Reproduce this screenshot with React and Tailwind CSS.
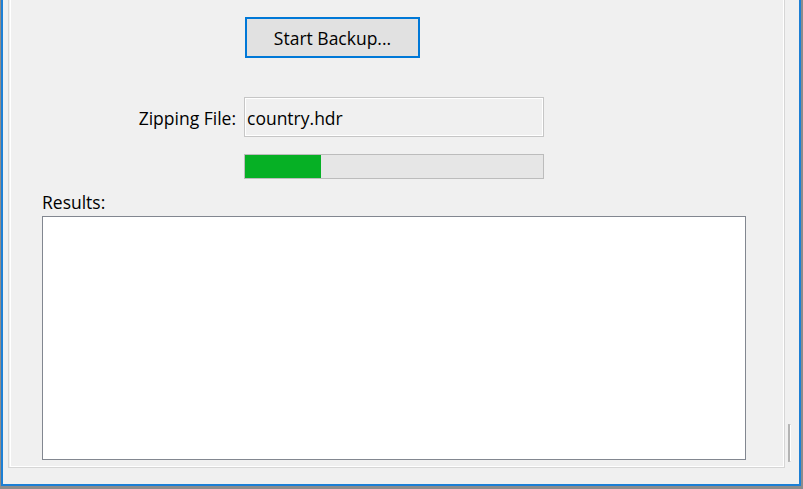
import React from "react";

const font = { fontFamily: '"Open Sans", "Noto Sans", sans-serif' };

export default function App() {
  const progress = 76;

  return (
    <div
      className="w-[803px] h-[489px] bg-[#8c8c8c] pl-[1px] pr-[2px] pb-[3px] overflow-hidden text-[#000000]"
      style={font}
    >
      <div className="h-full border-l-2 border-r-2 border-b-2 border-[#1c7fd5] bg-[#f0f0f0] flex">
        {/* tab page */}
        <div className="ml-[5px] mb-[16px] w-[777px] border-l border-r border-b border-[#d6d6d6] flex">
          <div className="ml-[1px] flex-1 border-l border-r border-b border-white flex flex-col pl-[31px]">
            <div className="pl-[203px] pt-[17px]">
              <button className="w-[175px] h-[41px] border-2 border-[#0078d7] bg-[#e1e1e1] text-[17.5px] leading-[22px]">
                Start Backup...
              </button>
            </div>

            <div className="flex items-center mt-[39px]">
              <div className="w-[194px] text-right text-[17.5px] leading-[22px] pt-[1px]">
                Zipping File:
              </div>
              <div className="ml-[8px] w-[300px] h-[40px] border border-[#c6c6c6]">
                <div className="h-full border border-white flex items-center pl-[1px] pt-[1px] text-[17.5px] leading-[22px]">
                  country.hdr
                </div>
              </div>
            </div>

            <div className="ml-[202px] mt-[17px] w-[300px] h-[25px] border border-[#bcbcbc] bg-[#e6e6e6]">
              <div className="h-full bg-[#06b025]" style={{ width: progress }} />
            </div>

            <div className="mt-[12px] text-[17.5px] leading-[22px]">Results:</div>
            <div className="mt-[3px] w-[704px] h-[244px] border border-[#828790] bg-white" />
          </div>
        </div>

        {/* right gutter with grip */}
        <div className="flex-1 flex flex-col justify-end pb-[22px] pl-[3px]">
          <div className="w-[3px] h-[38px] border-t border-b border-l-2 border-r border-t-[#c0c0c0] border-b-[#c0c0c0] border-l-[#b4b4b4] border-r-white" />
        </div>
      </div>
    </div>
  );
}
